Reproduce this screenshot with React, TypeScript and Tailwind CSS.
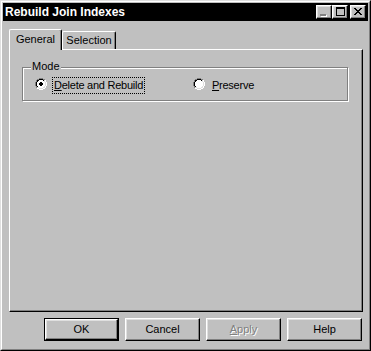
import React from 'react'

const raised =
  'border border-t-white border-l-white border-r-black border-b-black shadow-[inset_-1px_-1px_0_#808080,inset_1px_1px_0_#dfdfdf]'

// pixel rects for the small caption glyphs: [x, y, w]
const closeRows: [number, number, number][] = [
  [0, 0, 2], [6, 0, 2],
  [1, 1, 2], [5, 1, 2],
  [2, 2, 4],
  [3, 3, 2],
  [2, 4, 4],
  [1, 5, 2], [5, 5, 2],
  [0, 6, 2], [6, 6, 2],
]

function CapBtn({ children }: { children: React.ReactNode }) {
  return (
    <div className={`w-[16px] h-[14px] bg-[#c0c0c0] ${raised}`}>
      <svg width="14" height="12" viewBox="0 0 14 12" shapeRendering="crispEdges" className="block">
        {children}
      </svg>
    </div>
  )
}

// 12x12 win98 style radio, built pixel by pixel
const outerRing: [number, number][] = []
const innerRing: [number, number][] = []
;[4, 5, 6, 7].forEach(x => { outerRing.push([x, 0], [x, 11]); innerRing.push([x, 1], [x, 10]) })
;[4, 5, 6, 7].forEach(y => { outerRing.push([0, y], [11, y]); innerRing.push([1, y], [10, y]) })
;[[2, 1], [3, 1], [8, 1], [9, 1], [1, 2], [10, 2], [1, 3], [10, 3], [1, 8], [10, 8], [1, 9], [10, 9], [2, 10], [3, 10], [8, 10], [9, 10]].forEach(p =>
  outerRing.push(p as [number, number]))
;[[2, 2], [3, 2], [8, 2], [9, 2], [2, 3], [9, 3], [2, 8], [9, 8], [2, 9], [3, 9], [8, 9], [9, 9]].forEach(p =>
  innerRing.push(p as [number, number]))

function Radio({ checked }: { checked?: boolean }) {
  return (
    <svg width="12" height="12" viewBox="0 0 12 12" shapeRendering="crispEdges" className="block shrink-0 mt-[1px]">
      <rect x="2" y="2" width="8" height="8" fill="#fff" />
      <rect x="3" y="1" width="6" height="10" fill="#fff" />
      <rect x="1" y="3" width="10" height="6" fill="#fff" />
      {outerRing.map(([x, y]) => (
        <rect key={`o${x}-${y}`} x={x} y={y} width="1" height="1" fill={x + y <= 10 ? '#808080' : '#fff'} />
      ))}
      {innerRing.map(([x, y]) => (
        <rect key={`i${x}-${y}`} x={x} y={y} width="1" height="1" fill={x + y <= 10 ? '#000' : '#dfdfdf'} />
      ))}
      {checked && (
        <>
          <rect x="5" y="4" width="2" height="4" fill="#000" />
          <rect x="4" y="5" width="4" height="2" fill="#000" />
        </>
      )}
    </svg>
  )
}

function Button({ children, isDefault, disabled }: { children: React.ReactNode; isDefault?: boolean; disabled?: boolean }) {
  const label = (
    <span className={disabled ? 'text-[#808080] [text-shadow:1px_1px_0_#fff]' : ''}>{children}</span>
  )
  if (isDefault) {
    return (
      <div className="w-[75px] h-[23px] border border-black">
        <div className={`h-full flex items-center justify-center ${raised}`}>{label}</div>
      </div>
    )
  }
  return <div className={`w-[75px] h-[23px] flex items-center justify-center ${raised}`}>{label}</div>
}

export default function App() {
  return (
    <div className="w-[371px] h-[351px] bg-[#c0c0c0] border border-t-[#dfdfdf] border-l-[#dfdfdf] border-r-black border-b-black font-['Liberation_Sans',Arial,sans-serif] text-[11px] text-black select-none">
      <div className="h-full border border-t-white border-l-white border-r-[#808080] border-b-[#808080] p-px flex flex-col">
        {/* Title bar */}
        <div className="h-[18px] shrink-0 bg-black flex items-center pl-[2px] pr-[2px]">
          <span className="flex-1 text-white font-bold text-[12px] leading-none">Rebuild Join Indexes</span>
          <CapBtn>
            <rect x="4" y="9" width="6" height="2" fill="#fff" />
            <rect x="3" y="8" width="6" height="2" fill="#808080" />
          </CapBtn>
          <CapBtn>
            <rect x="3" y="1" width="9" height="2" fill="#000" />
            <rect x="3" y="1" width="1" height="9" fill="#000" />
            <rect x="11" y="1" width="1" height="9" fill="#000" />
            <rect x="3" y="9" width="9" height="1" fill="#000" />
          </CapBtn>
          <div className="ml-[2px]">
            <CapBtn>
              {closeRows.map(([x, y, w]) => (
                <rect key={`${x}-${y}`} x={x + 3} y={y + 2} width={w} height="1" fill="#000" />
              ))}
            </CapBtn>
          </div>
        </div>

        {/* Body */}
        <div className="flex-1 flex flex-col pl-[6px] pr-[5px] pt-[8px]">
          {/* Tabs */}
          <div className="flex items-end h-[20px] relative z-10">
            <div className="w-[53px] h-[21px] -mb-px bg-[#c0c0c0] border-t border-l border-r border-t-white border-l-white border-r-black rounded-t-[2px] shadow-[inset_-1px_0_0_#808080] flex items-center justify-center pb-[2px]">
              General
            </div>
            <div className="w-[54px] h-[18px] bg-[#c0c0c0] border-t border-l border-r border-t-white border-l-white border-r-black rounded-t-[2px] shadow-[inset_-1px_0_0_#808080] flex items-center justify-center">
              Selection
            </div>
          </div>

          {/* Tab panel */}
          <div className="h-[263px] border border-t-white border-l-white border-r-black border-b-black shadow-[inset_-1px_-1px_0_#808080] pt-[17px] pl-[12px]">
            <div className="relative w-[326px] h-[34px] border border-[#808080] shadow-[1px_1px_0_#fff,inset_1px_1px_0_#fff]">
              <span className="absolute -top-[8px] left-[8px] px-px bg-[#c0c0c0] leading-[13px]">Mode</span>
              <div className="flex items-start pt-[9px] pl-[12px] tracking-[-0.25px]">
                <div className="w-[158px] flex items-start">
                  <Radio checked />
                  <span className="ml-[5px] border border-dotted border-black px-px leading-[15px]">
                    <u className="underline-offset-[1px]">D</u>elete and Rebuild
                  </span>
                </div>
                <div className="flex items-start">
                  <Radio />
                  <span className="ml-[5px] border border-transparent px-px leading-[15px]">
                    <u className="underline-offset-[1px]">P</u>reserve
                  </span>
                </div>
              </div>
            </div>
          </div>

          {/* Buttons */}
          <div className="flex justify-end gap-[6px] mt-[6px] pr-[1px]">
            <Button isDefault>OK</Button>
            <Button>Cancel</Button>
            <Button disabled>
              <u className="underline-offset-[1px]">A</u>pply
            </Button>
            <Button>Help</Button>
          </div>
        </div>
      </div>
    </div>
  )
}
